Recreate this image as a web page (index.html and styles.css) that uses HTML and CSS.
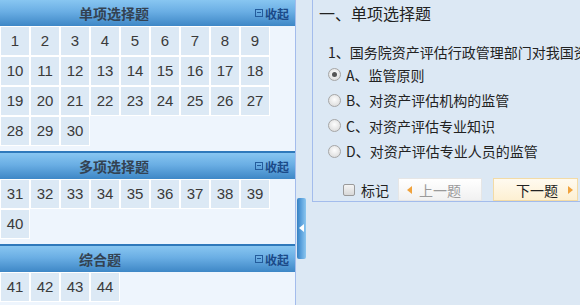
FILE: index.html
```html
<!DOCTYPE html>
<html lang="zh-CN">
<head>
    <meta charset="UTF-8">
    <title>在线考试</title>
    <link rel="stylesheet" href="styles.css">
</head>
<body>
    <div class="page">
        <div class="sidebar">
            <div class="group first">
                <div class="group-head">
                    <span class="group-title">单项选择题</span>
                    <a class="fold" href="#"><span class="fold-icon"></span>收起</a>
                </div>
                <ul class="nums">
                    <li>1</li><li>2</li><li>3</li><li>4</li><li>5</li><li>6</li><li>7</li><li>8</li><li>9</li>
                    <li>10</li><li>11</li><li>12</li><li>13</li><li>14</li><li>15</li><li>16</li><li>17</li><li>18</li>
                    <li>19</li><li>20</li><li>21</li><li>22</li><li>23</li><li>24</li><li>25</li><li>26</li><li>27</li>
                    <li>28</li><li>29</li><li>30</li>
                </ul>
            </div>
            <div class="group">
                <div class="group-head">
                    <span class="group-title">多项选择题</span>
                    <a class="fold" href="#"><span class="fold-icon"></span>收起</a>
                </div>
                <ul class="nums">
                    <li>31</li><li>32</li><li>33</li><li>34</li><li>35</li><li>36</li><li>37</li><li>38</li><li>39</li>
                    <li>40</li>
                </ul>
            </div>
            <div class="group">
                <div class="group-head">
                    <span class="group-title">综合题</span>
                    <a class="fold" href="#"><span class="fold-icon"></span>收起</a>
                </div>
                <ul class="nums">
                    <li>41</li><li>42</li><li>43</li><li>44</li>
                </ul>
            </div>
        </div>

        <div class="splitter"><span class="handle"></span></div>

        <div class="main">
            <div class="qbox">
                <h2>一、单项选择题</h2>
                <p class="question">1、国务院资产评估行政管理部门对我国资产评估行业的管理包括（ ）。</p>
                <label class="opt"><span class="radio checked"></span>A、监管原则</label>
                <label class="opt"><span class="radio"></span>B、对资产评估机构的监管</label>
                <label class="opt"><span class="radio"></span>C、对资产评估专业知识</label>
                <label class="opt"><span class="radio"></span>D、对资产评估专业人员的监管</label>
                <div class="qfoot">
                    <label class="mark"><span class="check"></span>标记</label>
                    <a class="btn btn-prev" href="#"><span class="arrow-left"></span>上一题</a>
                    <a class="btn btn-next" href="#">下一题<span class="arrow-right"></span></a>
                </div>
            </div>
        </div>
    </div>
</body>
</html>
```

FILE: styles.css
```css
body {
    margin: 0;
    font-family: "Liberation Sans", Arial, "Noto Sans CJK SC", sans-serif;
    color: #333;
    background-color: #dce8f4;
}
.page {
    display: flex;
    height: 305px;
    overflow: hidden;
}
.sidebar {
    width: 295px;
    flex-shrink: 0;
    background-color: #eef5fd;
    border-right: 1px solid #a3bcec;
    overflow: hidden;
}
.group.first { margin-top: -2px; }
.group-head {
    display: flex;
    align-items: center;
    height: 26px;
    border-top: 2px solid #2f79bb;
    background: linear-gradient(to bottom, #88c6f1 0%, #6aaee4 45%, #3e87c6 100%);
}
.group-title {
    padding-left: 79px;
    font-size: 14px;
    font-weight: bold;
    color: #334252;
}
.fold {
    margin-left: auto;
    margin-right: 6px;
    display: flex;
    align-items: center;
    font-size: 12px;
    font-weight: bold;
    color: #1b4a88;
    text-decoration: none;
}
.fold-icon {
    position: relative;
    width: 6px;
    height: 6px;
    border: 1px solid #245c9c;
    margin-right: 2px;
}
.fold-icon::after {
    content: "";
    position: absolute;
    left: 1px;
    top: 2px;
    width: 4px;
    height: 1px;
    background: #245c9c;
}
.nums {
    list-style: none;
    margin: 0;
    padding: 0 0 5px 0;
    width: 270px;
    display: flex;
    flex-wrap: wrap;
}
.nums li {
    width: 28px;
    height: 28px;
    line-height: 28px;
    border: 1px solid #fff;
    background-color: #dce9f5;
    text-align: center;
    font-size: 15px;
    color: #3a3a3a;
}
.splitter {
    width: 16px;
    flex-shrink: 0;
}
.handle {
    position: relative;
    display: block;
    width: 9px;
    height: 61px;
    margin: 198px 0 0 1px;
    border-radius: 2px;
    background: linear-gradient(to right, #3580c3, #5fa4de 50%, #8cc6ef);
}
.handle::after {
    content: "";
    position: absolute;
    left: 2px;
    top: 26px;
    border-top: 4px solid transparent;
    border-bottom: 4px solid transparent;
    border-right: 5px solid #fff;
}
.main {
    flex: 1;
    overflow: hidden;
}
.qbox {
    width: 300px;
    margin-top: -1px;
    border: 1px solid #a3bcec;
    font-family: "Noto Sans CJK SC", "Liberation Sans", sans-serif;
}
.qbox h2 {
    margin: 0;
    padding-left: 6px;
    height: 26px;
    line-height: 26px;
    font-size: 16px;
    font-weight: normal;
    color: #222;
}
.question {
    margin: 16px 0 0 15px;
    height: 20px;
    line-height: 20px;
    font-size: 14px;
    white-space: nowrap;
    color: #222;
}
.opt {
    display: flex;
    align-items: center;
    height: 25.5px;
    padding-left: 15px;
    font-size: 14px;
    color: #222;
}
.radio {
    position: relative;
    width: 11px;
    height: 11px;
    margin-right: 5px;
    border: 1px solid #a6a6a6;
    border-radius: 50%;
    background: radial-gradient(circle at 50% 40%, #fdfdfd, #d6d6d6);
}
.radio.checked::after {
    content: "";
    position: absolute;
    left: 3px;
    top: 3px;
    width: 5px;
    height: 5px;
    border-radius: 50%;
    background: #555;
}
.qfoot {
    display: flex;
    align-items: center;
    margin-top: 14px;
    padding-left: 30px;
}
.mark {
    display: flex;
    align-items: center;
    font-size: 14px;
    color: #222;
    margin-right: 9px;
}
.check {
    width: 10px;
    height: 10px;
    margin-right: 6px;
    border: 1px solid #9a9a9a;
    border-radius: 2px;
    background: linear-gradient(to bottom, #f4f4f4, #d8d8d8);
}
.btn {
    display: flex;
    align-items: center;
    box-sizing: border-box;
    width: 84px;
    height: 23px;
    font-size: 14px;
    text-decoration: none;
}
.btn-prev {
    padding-left: 8px;
    border: 1px solid #e6e6e6;
    background: linear-gradient(to bottom, #ffffff, #f1f1f1);
    color: #9a9a9a;
    margin-right: 11px;
}
.btn-next {
    width: 85px;
    padding-left: 22px;
    border: 1px solid #f3dba6;
    background: linear-gradient(to bottom, #fffaf0, #fdf0d2);
    color: #222;
}
.arrow-left {
    margin-right: 7px;
    border-top: 4px solid transparent;
    border-bottom: 4px solid transparent;
    border-right: 5px solid #f0a23c;
}
.arrow-right {
    margin-left: 10px;
    border-top: 4px solid transparent;
    border-bottom: 4px solid transparent;
    border-left: 5px solid #f0a23c;
}
```
